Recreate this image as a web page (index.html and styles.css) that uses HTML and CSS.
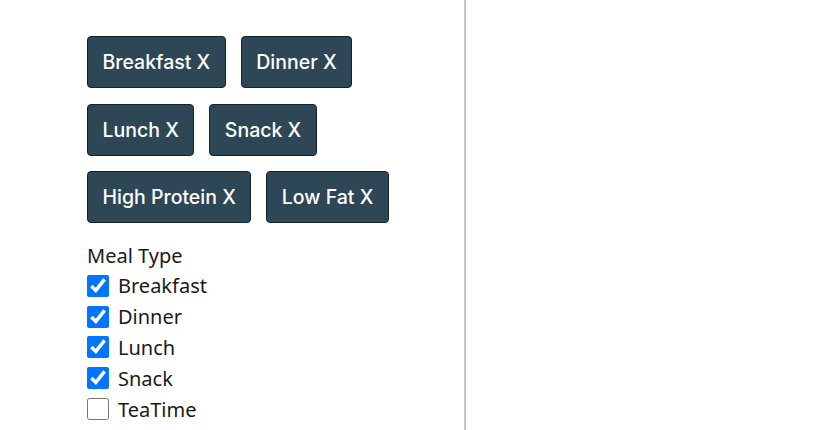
FILE: index.html
```html
<!DOCTYPE html>
<html>
<head>
<meta charset="utf-8">
<link rel="stylesheet" href="styles.css">
</head>
<body>
<div class="page">
  <div class="panel">
    <div class="chips">
      <div class="chip-row">
        <button class="chip">Breakfast X</button>
        <button class="chip">Dinner X</button>
      </div>
      <div class="chip-row">
        <button class="chip">Lunch X</button>
        <button class="chip">Snack X</button>
      </div>
      <div class="chip-row">
        <button class="chip">High Protein X</button>
        <button class="chip">Low Fat X</button>
      </div>
    </div>
    <div class="group">
      <div class="group-title">Meal Type</div>
      <label class="option"><input type="checkbox" checked><span>Breakfast</span></label>
      <label class="option"><input type="checkbox" checked><span>Dinner</span></label>
      <label class="option"><input type="checkbox" checked><span>Lunch</span></label>
      <label class="option"><input type="checkbox" checked><span>Snack</span></label>
      <label class="option"><input type="checkbox"><span>TeaTime</span></label>
    </div>
  </div>
  <div class="main"></div>
</div>
</body>
</html>
```
FILE: styles.css
```css
html, body {
  margin: 0;
  padding: 0;
  background: #ffffff;
  height: 100%;
}
body {
  font-family: "Noto Sans", "Liberation Sans", sans-serif;
  color: #1a1a1a;
  overflow: hidden;
}
.page {
  display: flex;
  height: 430px;
}
.panel {
  width: 466px;
  box-sizing: border-box;
  border-right: 2px solid #c6c6c6;
  padding: 36px 0 0 87px;
  flex: none;
}
.main {
  flex: 1;
}
.chips {
  display: flex;
  flex-direction: column;
  gap: 15.5px;
}
.chip-row {
  display: flex;
  gap: 15px;
}
.chip {
  font-family: "Inter", "Noto Sans", sans-serif;
  font-size: 19.5px;
  font-weight: 500;
  line-height: 24px;
  color: #ffffff;
  background: #2e4756;
  border: 1px solid #14222c;
  border-radius: 4px;
  padding: 13px 14.5px;
  margin: 0;
  cursor: pointer;
}
.group {
  margin-top: 16.5px;
}
.group-title {
  font-size: 20px;
  line-height: 31px;
}
.option {
  display: flex;
  align-items: center;
  height: 30.8px;
  font-size: 20px;
}
.option input {
  width: 22px;
  height: 22px;
  margin: 0 9px 0 0;
}
```
